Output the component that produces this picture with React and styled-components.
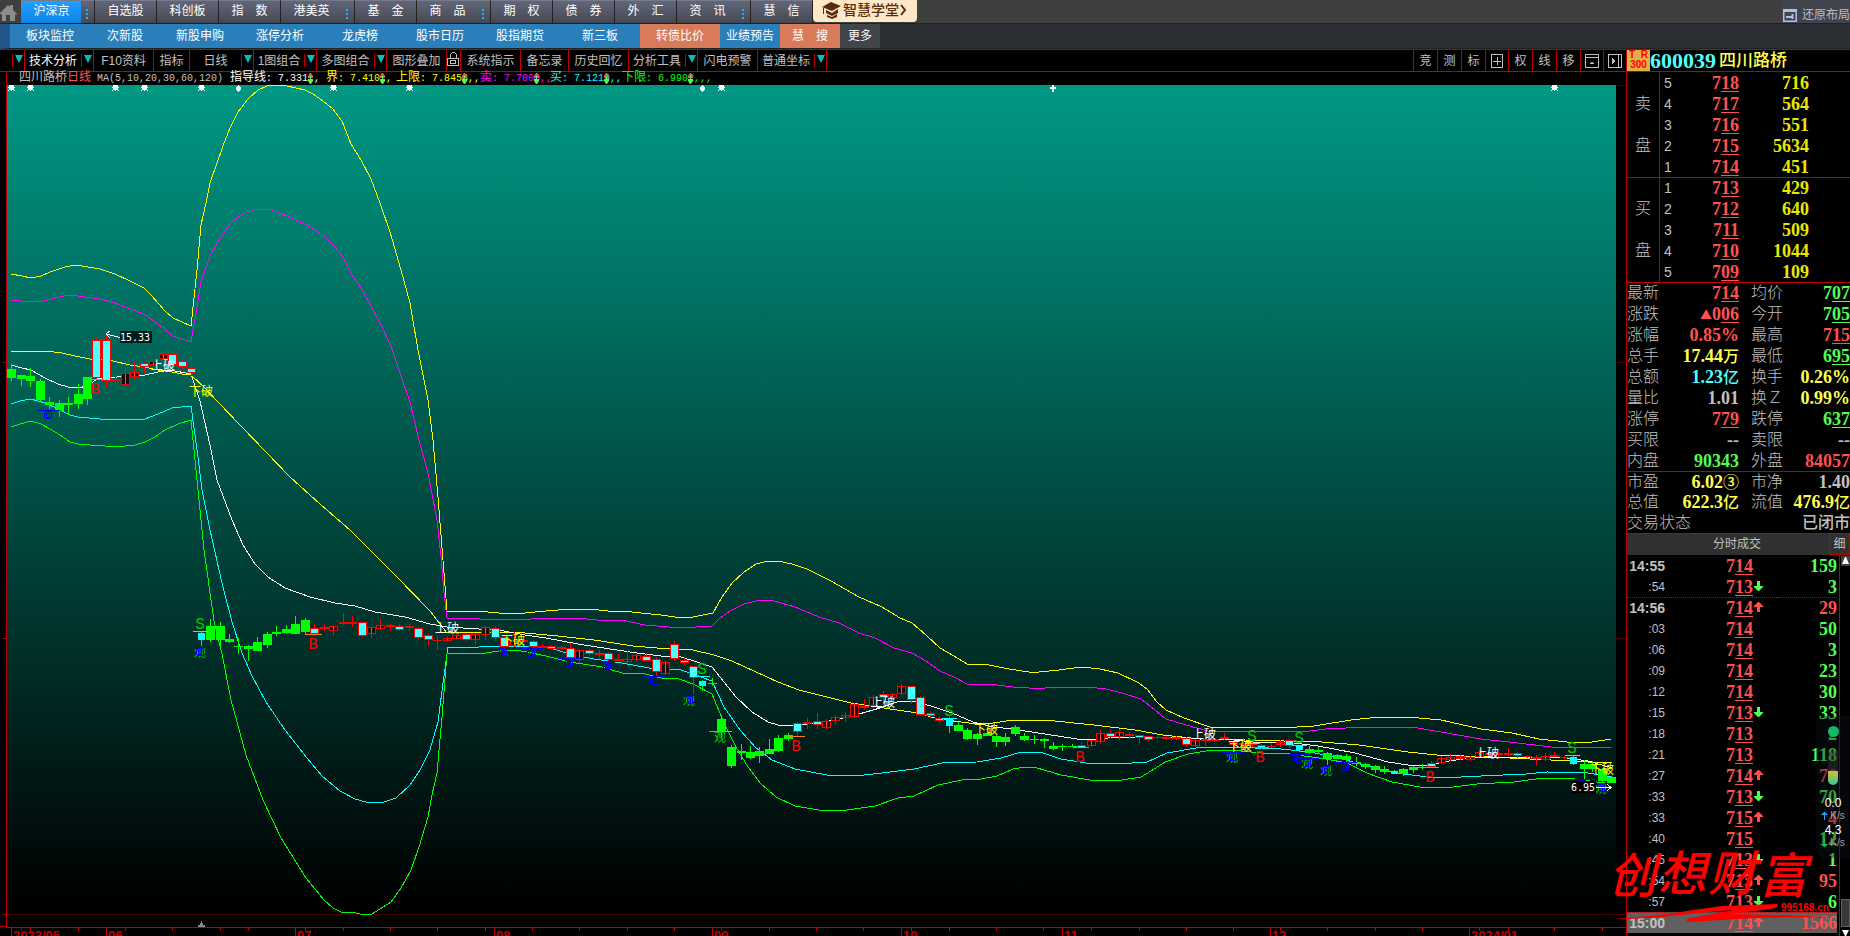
import styled, { createGlobalStyle } from "styled-components";

const RED = "#c00000";

const menu = [
    { label: "沪深京", active: true, more: true },
    { label: "自选股" },
    { label: "科创板" },
    { label: "指　数" },
    { label: "港美英", more: true },
    { label: "基　金" },
    { label: "商　品", more: true },
    { label: "期　权" },
    { label: "债　券" },
    { label: "外　汇" },
    { label: "资　讯", more: true },
    { label: "慧　信" },
];

const links = [
    { label: "板块监控", width: 80 },
    { label: "次新股", width: 70 },
    { label: "新股申购", width: 80 },
    { label: "涨停分析", width: 80 },
    { label: "龙虎榜", width: 80 },
    { label: "股市日历", width: 80 },
    { label: "股指期货", width: 80 },
    { label: "新三板", width: 80 },
    { label: "转债比价", width: 80, bg: "#d97a5b" },
    { label: "业绩预告", width: 60 },
    { label: "慧　搜", width: 60, bg: "#d97a5b" },
    { label: "更多", width: 40, bg: "#41444a" },
];

const tools = [
    { label: "", width: 25, drop: true },
    { label: "技术分析", width: 69, drop: true, active: true },
    { label: "F10资料", width: 60 },
    { label: "指标", width: 36 },
    { label: "日线", width: 64, drop: true },
    { label: "1图组合", width: 63, drop: true },
    { label: "多图组合", width: 70, drop: true },
    { label: "图形叠加", width: 60 },
    { label: "lock", width: 14 },
    { label: "系统指示", width: 60 },
    { label: "备忘录", width: 48 },
    { label: "历史回忆", width: 60 },
    { label: "分析工具", width: 69, drop: true },
    { label: "闪电预警", width: 60 },
    { label: "普通坐标", width: 69, drop: true },
];

const sideTools = ["竞", "测", "标", "plus", "权", "线", "移", "window", "next"];

const indicators = [
    { label: "指导线", value: "7.331", color: "#fff", width: 96, end: "," },
    { label: "界", value: "7.410", color: "#ff0", width: 70, end: "," },
    { label: "上限", value: "7.8458", color: "#ff0", width: 84, end: ",,", over: true },
    { label: "卖", value: "7.7000", color: "#f0f", width: 70, end: ",,", over: true },
    { label: "买", value: "7.1219", color: "#0ff", width: 72, end: ",,", over: true },
    { label: "下限", value: "6.9902", color: "#0f0", width: 100, end: ",,,", over: true },
];

const sells = [["5", "718", "716"], ["4", "717", "564"], ["3", "716", "551"], ["2", "715", "5634"], ["1", "714", "451"]];
const buys = [["1", "713", "429"], ["2", "712", "640"], ["3", "711", "509"], ["4", "710", "1044"], ["5", "709", "109"]];

const R = "#ff5050";
const G = "#50ff50";
const Y = "#ffff50";
const W = "#c0c0c0";

const stats = [
    ["最新", "714", R, "均价", "707", G],
    ["涨跌", "▲006", R, "今开", "705", G],
    ["涨幅", "0.85%", R, "最高", "715", R],
    ["总手", "17.44万", Y, "最低", "695", G],
    ["总额", "1.23亿", "#50ffff", "换手", "0.26%", Y],
    ["量比", "1.01", W, "换Ｚ", "0.99%", Y],
    ["涨停", "779", R, "跌停", "637", G],
    ["买限", "--", W, "卖限", "--", W],
    ["内盘", "90343", G, "外盘", "84057", R],
];

const values = [
    ["市盈", "6.02③", Y, "市净", "1.40", W],
    ["总值", "622.3亿", Y, "流值", "476.9亿", Y],
];

const ticks = [
    ["14:55", "714", "", "159", G],
    [":54", "713", "down", "3", G],
    ["14:56", "714", "up", "29", R],
    [":03", "714", "", "50", G],
    [":06", "714", "", "3", G],
    [":09", "714", "", "23", G],
    [":12", "714", "", "30", G],
    [":15", "713", "down", "33", G],
    [":18", "713", "", "2", G],
    [":21", "713", "", "118", G],
    [":27", "714", "up", "70", R],
    [":33", "713", "down", "70", G],
    [":33", "715", "up", "4", R],
    [":40", "715", "", "12", G],
    [":45", "713", "down", "1", G],
    [":54", "715", "up", "95", R],
    [":57", "713", "down", "6", G],
    ["15:00", "714", "up", "1566", R],
];

const curves = [
    { color: "#ff0", points: "11,274 22,276 31,278 41,276 50,272 65,267 76,265 88,267 100,269 115,274 130,281 144,288 152,296 165,311 173,318 182,322 191,326 197,270 201,225 206,203 210,183 217,163 223,146 230,128 238,112 248,99 258,90 267,86 277,85 287,86 305,90 313,94 323,101 333,109 342,121 351,144 361,160 371,179 380,203 390,232 401,270 410,303 418,350 428,400 433,440 438,497 444,573 447,611 477,611 499,613 525,613 546,611 570,609 590,609 608,611 622,611 641,613 661,615 675,617 693,617 713,613 722,597 732,583 744,572 756,564 768,561 778,561 792,564 807,569 831,581 859,597 882,607 900,618 912,623 926,635 940,648 954,656 967,664 989,665 1009,669 1029,672 1039,672 1059,670 1081,667 1100,669 1118,673 1139,683 1148,690 1157,702 1166,710 1184,718 1210,727 1261,727 1281,728 1314,726 1351,720 1379,717 1408,717 1441,720 1481,729 1512,733 1539,739 1567,742 1592,742 1611,739" },
    { color: "#f0f", points: "11,300 31,302 43,301 55,298 68,295 78,296 100,299 115,303 130,309 144,314 158,324 173,336 182,339 191,342 197,307 201,282 210,256 217,243 230,224 238,217 247,212 258,209 268,209 277,212 287,216 305,224 317,231 325,237 333,245 343,257 352,275 363,291 380,323 391,346 400,373 410,402 419,440 428,473 437,520 441,557 444,593 447,618 480,619 531,619 543,618 558,619 578,618 606,621 622,620 645,625 681,628 712,626 720,618 730,611 744,604 760,600 774,601 795,607 819,617 839,623 859,633 875,638 894,648 912,653 926,661 940,671 954,677 967,684 989,684 1013,687 1029,688 1045,688 1065,687 1088,687 1106,689 1122,693 1141,699 1155,710 1166,719 1186,725 1208,731 1245,731 1302,732 1326,729 1367,727 1412,727 1441,732 1481,739 1518,743 1551,747 1596,748 1611,747" },
    { color: "#ff0", points: "11,352 22,351 45,351 62,353 75,356 90,359 113,361 130,365 144,367 158,370 172,372 182,374 191,375 205,388 217,401 290,477 320,504 350,530 395,575 430,611 447,633 499,632 525,633 558,636 594,640 633,646 657,648 693,650 714,655 732,661 756,672 778,682 799,690 827,697 851,703 871,706 890,709 918,713 938,719 969,723 993,723 1013,720 1045,720 1094,725 1135,730 1163,735 1200,739 1228,739 1245,740 1322,742 1359,745 1408,752 1437,755 1490,757 1530,759 1571,761 1588,762 1612,763" },
    { color: "#fff", points: "11,365 22,368 31,370 45,378 58,384 68,387 80,388 90,384 97,379 105,378 130,376 145,375 158,372 170,370 191,374 200,401 210,445 217,480 232,520 243,545 255,564 268,577 285,588 310,597 335,603 355,606 375,612 405,617 430,624 447,627 479,629 499,630 525,635 546,638 578,644 610,649 637,653 661,656 681,657 697,662 712,667 724,682 736,697 752,712 768,722 778,725 795,725 819,723 839,719 859,714 880,708 900,701 914,701 934,707 952,713 973,722 993,727 1012,729 1045,734 1077,739 1098,739 1118,737 1175,737 1200,739 1224,739 1253,742 1286,742 1318,746 1355,753 1388,762 1408,765 1428,765 1449,761 1477,757 1530,757 1567,758 1588,761 1612,768" },
    { color: "#0ff", points: "11,404 20,401 31,399 45,403 58,409 70,415 78,417 100,419 125,420 145,419 158,414 172,408 191,406 198,457 202,490 210,530 222,583 232,622 242,653 252,676 266,702 285,730 307,758 322,776 340,791 355,799 366,802 384,802 396,798 410,785 420,770 430,750 438,722 443,683 448,647 479,647 491,646 525,646 550,648 570,654 594,659 622,663 649,668 681,670 693,674 712,681 724,707 740,730 756,748 772,760 795,769 827,775 855,776 882,773 914,769 942,763 977,762 1001,758 1021,752 1043,753 1061,759 1086,763 1118,764 1147,762 1167,753 1196,748 1228,747 1281,749 1310,752 1339,758 1367,766 1396,773 1428,777 1461,777 1481,776 1526,774 1547,772 1588,773 1612,777" },
    { color: "#0f0", points: "11,427 20,424 31,421 41,424 50,429 60,435 70,442 78,444 90,445 105,446 115,447 135,445 145,442 155,437 165,430 178,424 191,420 197,480 204,550 214,621 222,654 231,700 246,755 263,800 281,838 306,878 324,900 333,908 343,913 352,912 360,914 372,914 391,902 401,888 411,870 419,847 428,817 432,795 437,773 442,717 447,654 467,653 479,654 499,651 515,650 527,652 546,656 570,662 602,667 622,673 641,673 661,678 679,679 693,684 712,694 724,723 736,747 748,767 760,783 776,797 795,806 819,810 847,810 875,806 898,798 914,796 938,785 962,780 981,779 997,776 1013,769 1025,767 1037,768 1061,775 1090,780 1122,780 1141,777 1151,771 1165,762 1188,754 1212,750 1241,751 1261,753 1290,754 1326,759 1347,763 1367,773 1392,782 1420,787 1453,787 1477,784 1514,782 1543,778 1575,779 1612,784" },
];

// x, body top, body bottom, high, low, kind
// g = falling, c = signal bar, f = red with cyan fill, h = hollow red, r = thin red
const candles = [
    [11, 369, 378, 364, 381, "g"], [21, 375, 379, 375, 386, "g"], [30, 376, 381, 368, 387, "g"], [40, 381, 400, 379, 401, "g"],
    [49, 402, 405, 397, 409, "g"], [59, 403, 411, 400, 417, "g"], [68, 403, 405, 397, 415, "g"], [78, 394, 404, 384, 409, "g"],
    [87, 377, 399, 377, 405, "g"], [96, 340, 378, 337, 379, "f"], [106, 340, 381, 335, 387, "f"], [115, 379, 381, 374, 390, "r"],
    [125, 373, 385, 365, 390, "h"], [134, 372, 377, 362, 380, "h"], [144, 363, 367, 361, 374, "f"], [153, 361, 365, 359, 366, "h"],
    [163, 354, 359, 352, 362, "h"], [172, 354, 365, 353, 366, "f"], [182, 361, 367, 359, 370, "f"], [191, 368, 373, 358, 376, "f"],
    [201, 633, 640, 631, 646, "c"], [210, 626, 640, 619, 642, "g"], [220, 626, 640, 622, 647, "g"], [229, 639, 642, 634, 643, "g"],
    [238, 646, 647, 638, 654, "g"], [248, 646, 649, 645, 661, "g"], [257, 642, 651, 637, 651, "g"], [267, 634, 645, 632, 648, "g"],
    [276, 632, 634, 626, 636, "g"], [286, 629, 633, 625, 634, "g"], [295, 624, 634, 616, 634, "g"], [305, 620, 632, 618, 635, "g"],
    [314, 628, 634, 624, 636, "f"], [324, 627, 629, 624, 631, "r"], [333, 626, 631, 625, 636, "h"], [343, 622, 624, 613, 625, "r"],
    [352, 622, 624, 616, 627, "r"], [362, 622, 636, 622, 637, "f"], [371, 627, 634, 627, 638, "h"], [380, 625, 629, 619, 630, "h"],
    [390, 625, 627, 624, 631, "r"], [399, 626, 630, 624, 631, "f"], [409, 626, 628, 624, 631, "r"], [418, 628, 638, 627, 639, "f"],
    [428, 635, 640, 634, 646, "f"], [437, 640, 641, 636, 650, "r"], [447, 638, 641, 636, 642, "h"], [456, 635, 639, 634, 640, "h"],
    [466, 634, 640, 633, 641, "f"], [475, 634, 640, 633, 645, "h"], [485, 627, 635, 626, 640, "h"], [495, 628, 638, 626, 641, "f"],
    [504, 637, 647, 636, 648, "f"], [514, 641, 646, 632, 647, "h"], [523, 640, 642, 638, 645, "r"], [533, 641, 647, 640, 648, "f"],
    [542, 646, 648, 644, 649, "r"], [551, 646, 649, 645, 650, "f"], [561, 647, 649, 646, 650, "r"], [570, 648, 658, 643, 659, "f"],
    [579, 650, 660, 649, 663, "h"], [589, 650, 654, 649, 656, "f"], [599, 653, 655, 650, 658, "r"], [608, 653, 660, 652, 661, "f"],
    [618, 659, 661, 654, 662, "r"], [627, 659, 662, 651, 664, "h"], [636, 655, 660, 654, 662, "h"], [646, 656, 661, 653, 662, "f"],
    [656, 659, 672, 657, 676, "f"], [665, 662, 674, 661, 675, "h"], [674, 644, 659, 641, 661, "f"], [684, 660, 663, 657, 665, "f"],
    [693, 666, 678, 666, 694, "f"], [702, 681, 686, 680, 691, "c"], [712, 683, 684, 678, 686, "g"], [721, 719, 732, 715, 738, "g"],
    [731, 747, 766, 745, 768, "g"], [741, 751, 753, 744, 760, "g"], [750, 752, 758, 746, 759, "g"], [759, 751, 756, 747, 763, "g"],
    [769, 749, 754, 739, 754, "g"], [778, 738, 751, 735, 752, "g"], [788, 735, 739, 733, 741, "g"], [797, 723, 732, 722, 736, "f"],
    [807, 722, 724, 718, 729, "r"], [817, 721, 725, 713, 729, "f"], [826, 721, 728, 719, 729, "h"], [835, 717, 721, 715, 724, "h"],
    [845, 715, 718, 712, 722, "h"], [854, 704, 717, 703, 718, "h"], [864, 706, 708, 699, 709, "r"], [873, 697, 706, 695, 708, "h"],
    [883, 694, 698, 691, 706, "f"], [892, 694, 698, 693, 700, "h"], [901, 686, 694, 684, 695, "h"], [911, 686, 700, 686, 704, "f"],
    [920, 697, 715, 696, 716, "f"], [930, 713, 716, 711, 718, "f"], [939, 718, 721, 717, 723, "f"], [949, 718, 726, 717, 733, "c"],
    [958, 725, 731, 722, 731, "g"], [967, 730, 739, 728, 740, "g"], [977, 734, 739, 733, 745, "g"], [987, 733, 736, 731, 736, "g"],
    [996, 736, 742, 735, 747, "g"], [1005, 737, 742, 733, 746, "g"], [1015, 727, 734, 725, 736, "g"], [1024, 736, 740, 733, 741, "g"],
    [1034, 739, 740, 735, 744, "g"], [1044, 739, 741, 738, 748, "g"], [1053, 746, 749, 742, 750, "g"], [1062, 746, 747, 744, 751, "g"],
    [1072, 746, 747, 744, 747, "g"], [1081, 745, 747, 742, 748, "f"], [1091, 740, 746, 740, 747, "h"], [1100, 733, 742, 730, 744, "h"],
    [1110, 733, 737, 730, 738, "f"], [1119, 732, 737, 729, 740, "h"], [1129, 734, 736, 732, 739, "r"], [1139, 735, 738, 735, 743, "f"],
    [1148, 736, 740, 736, 742, "f"], [1157, 737, 738, 736, 739, "r"], [1166, 737, 739, 736, 740, "r"], [1176, 737, 739, 736, 740, "r"],
    [1186, 738, 745, 737, 747, "f"], [1195, 740, 746, 739, 747, "h"], [1205, 739, 741, 738, 746, "r"], [1214, 739, 741, 738, 742, "r"],
    [1224, 737, 739, 733, 740, "r"], [1233, 742, 745, 741, 751, "f"], [1243, 743, 745, 738, 746, "r"], [1252, 743, 745, 742, 747, "r"],
    [1261, 745, 748, 744, 749, "f"], [1271, 746, 747, 743, 748, "r"], [1280, 742, 745, 740, 747, "h"], [1289, 740, 746, 739, 748, "f"],
    [1299, 746, 750, 745, 752, "c"], [1309, 749, 753, 746, 755, "g"], [1318, 750, 752, 747, 754, "g"], [1327, 753, 759, 752, 765, "g"],
    [1337, 755, 759, 754, 759, "g"], [1346, 756, 760, 754, 762, "g"], [1356, 762, 764, 757, 766, "g"], [1365, 764, 767, 763, 769, "g"],
    [1375, 766, 770, 765, 773, "g"], [1384, 769, 772, 766, 774, "g"], [1394, 771, 774, 770, 774, "c"], [1403, 769, 774, 768, 776, "g"],
    [1413, 767, 770, 766, 773, "g"], [1422, 767, 768, 764, 769, "g"], [1431, 763, 767, 761, 768, "f"], [1441, 758, 763, 756, 764, "h"],
    [1450, 757, 760, 754, 761, "h"], [1460, 756, 759, 755, 760, "h"], [1470, 757, 760, 756, 761, "h"], [1479, 752, 757, 750, 758, "h"],
    [1489, 753, 755, 751, 757, "r"], [1498, 753, 755, 751, 757, "r"], [1508, 753, 755, 748, 756, "r"], [1517, 753, 756, 752, 758, "f"],
    [1527, 756, 757, 755, 758, "r"], [1536, 757, 759, 755, 765, "r"], [1545, 756, 760, 753, 761, "h"], [1554, 755, 757, 752, 757, "r"],
    [1564, 757, 758, 756, 759, "r"], [1573, 757, 764, 755, 765, "c"], [1584, 764, 769, 760, 779, "g"], [1592, 764, 769, 761, 772, "g"],
    [1602, 769, 781, 768, 783, "g"], [1611, 777, 783, 777, 783, "g"],
];

const upBreaks = [[151, 370], [435, 633], [871, 707], [1192, 739], [1475, 758]];
const downBreaks = [[189, 396], [501, 645], [974, 734], [1228, 751], [1590, 774]];
const sellMarks = [[200, 629], [702, 674], [949, 716], [1252, 741], [1299, 743], [1572, 753]];
const buyMarks = [[95, 394], [313, 649], [796, 751], [1080, 762], [1260, 762], [1430, 782]];
const rings = [[48, 415], [503, 652], [531, 653], [569, 663], [607, 666], [654, 681], [1298, 759], [1345, 767], [1583, 784], [200, 652], [689, 700], [1232, 757], [1307, 763], [1326, 770], [1601, 788]];
const watch = [[200, 652], [689, 700], [720, 737], [1232, 757], [1307, 763], [1326, 770], [1601, 788]];
const stars = [11, 30, 115, 144, 201, 333, 409, 721, 1554];
const months = [[11, "2023/05"], [106, "06"], [295, "07"], [494, "08"], [712, "09"], [901, "10"], [1062, "11"], [1270, "12"], [1469, "2024/01"]];
const minorTicks = [21, 30, 78, 125, 172, 220, 248, 305, 343, 390, 437, 485, 532, 579, 627, 674, 721, 769, 816, 863, 911, 949, 996, 1043, 1091, 1139, 1186, 1233, 1280, 1327, 1375, 1422, 1479, 1508, 1554, 1602];

const Candle = ({ data }) => {
    const [x, top, bottom, high, low, kind] = data;
    const line = kind === "g" || kind === "c" ? "#0f0" : "#f00";
    const h = Math.max(bottom - top, 1);

    return (
        <g>
            <rect x={x} y={high} width="1" height={low - high} fill={line} />
            {kind === "g" && <rect x={x - 4} y={top} width="9" height={h} fill="#0f0" />}
            {kind === "r" && <rect x={x - 4} y={top} width="9" height={h} fill="#f00" />}
            {kind === "c" && <rect x={x - 3} y={top} width="7" height={h} fill="#0ff" />}
            {kind === "f" && (
                <>
                    <rect x={x - 4} y={top} width="9" height={h} fill="#f00" />
                    <rect x={x - 3} y={top + 1} width="7" height={Math.max(h - 2, 1)} fill="#50ffff" />
                </>
            )}
            {kind === "h" && (
                <>
                    <rect x={x - 4} y={top} width="9" height={h} fill="#f00" />
                    <rect x={x - 3} y={top + 1} width="7" height={Math.max(h - 2, 1)} fill="#200808" />
                    <rect x={x} y={top + 1} width="1" height={Math.max(h - 2, 1)} fill="#ff5050" />
                </>
            )}
        </g>
    );
};

const Chart = () => (
    <ChartSvg viewBox="0 85 1626 851" preserveAspectRatio="xMinYMin slice" shapeRendering="crispEdges">
        <defs>
            <linearGradient id="sea" x1="0" y1="0" x2="0" y2="1">
                <stop offset="0" stopColor="#009884" />
                <stop offset="1" stopColor="#000" />
            </linearGradient>
        </defs>
        <rect x="7" y="85" width="1609" height="822" fill="url(#sea)" />
        <path d="M7 914.5H1626M1616 85.5H1626M1616 362.5H1626M1616 638.5H1626" stroke="#4a0000" />
        <path d="M6.5 85V927M3 362.5H7M3 638.5H7M3 914.5H7M0 926.5H7M6 927.5H1626" stroke={RED} fill="none" />
        <path d="M0 85" />
        {curves.map((c) => (
            <polyline key={c.points} points={c.points} fill="none" stroke={c.color} />
        ))}
        {candles.map((c) => <Candle key={c[0]} data={c} />)}
        {sellMarks.map(([x, y]) => (
            <g key={x}>
                <rect x={x - 7} y={y + 2} width="15" height="1" fill="#0ff" />
                <Mark x={x} y={y} fill="#00c800">S</Mark>
            </g>
        ))}
        {buyMarks.map(([x, y]) => (
            <g key={x}>
                <rect x={x - 7} y={y - 15} width="16" height="1" fill="#ff8000" />
                <Mark x={x} y={y} fill="#f00">B</Mark>
            </g>
        ))}
        {watch.map(([x, y]) => (
            <Watch key={x} x={x} y={y + 5}>观</Watch>
        ))}
        <rect x="709" y="731" width="23" height="1" fill="#0f0" />
        {rings.map(([x, y]) => (
            <g key={x} stroke="#00f" fill="none">
                <path d={`M${x - 11} ${y - 5}.5H${x + 12}`} />
                <circle cx={x} cy={y} r="4" />
                <rect x={x - 2} y={y - 2} width="3" height="4" />
            </g>
        ))}
        {upBreaks.map(([x, y]) => <Break key={x} x={x} y={y} fill="#fff">上破</Break>)}
        {downBreaks.map(([x, y]) => <Break key={x} x={x} y={y} fill="#ff0">下破</Break>)}
        {stars.map((x) => (
            <path key={x} d={`M${x - 2} 85h5v5h-5zM${x - 3} 84h1v1h-1zM${x + 3} 84h1v1h-1zM${x - 3} 90h1v1h-1zM${x + 3} 90h1v1h-1zM${x - 3} 87h7v1h-7zM${x} 84h1v7h-1z`} fill="#fff" />
        ))}
        {[238, 702].map((x) => (
            <path key={x} d={`M${x} 85h1v1h1v1h1v3h-1v1h-1v1h-1v-1h-1v-1h-1v-3h1v-1h1z`} fill="#fff" />
        ))}
        <path d="M1052 85h2v2h2v2h-2v3h-2v-3h-2v-2h2z" fill="#fff" />
        <rect x="120" y="331" width="32" height="12" fill="#001c18" />
        <Price x="120" y="341">15.33</Price>
        <path d="M120 337.5L106 334M110 331L106 334L110 338M1595 787.5H1611M1607 784L1611 787.5L1607 791" stroke="#fff" fill="none" />
        <rect x="1571" y="781" width="25" height="12" fill="#000" />
        <Price x="1571" y="791">6.95</Price>
        <path d="M198 927h7v-2h-2v-2h-1v-2h-1v2h-1v2h-2z" fill="#888" />
        {minorTicks.map((x) => <rect key={x} x={x} y="928" width="1" height="3" fill={RED} />)}
        {months.map(([x, label]) => (
            <g key={x}>
                <rect x={x} y="928" width="1" height="8" fill={RED} />
                <Month x={x + 2} y="940">{label}</Month>
            </g>
        ))}
    </ChartSvg>
);

const ToolIcon = ({ name }) => (
    <svg width="14" height="14" viewBox="0 0 14 14" fill="none" stroke="#c0c0c0" shapeRendering="crispEdges">
        {name === "plus" && <path d="M1.5 .5H12.5V13.5H1.5ZM3 7H11M7 3V11" />}
        {name === "window" && <path d="M.5 .5H13.5V13.5H.5ZM0 3.5H14M5 9.5H9M6 8.5H8" />}
        {name === "next" && <path d="M.5 .5H13.5V13.5H.5ZM10.5 1V13M4.5 4V10M5.5 5V9M6.5 6V8" />}
        {name === "lock" && <path d="M1.5 6.5H12.5V13.5H1.5ZM4.5 6V2.5L6.5 .5H8.5L10.5 2.5V6M4.5 8.5H9.5V11.5H4.5Z" />}
    </svg>
);

const Arrow = ({ up }) => (
    <svg width="9" height="10" viewBox="0 0 9 10" aria-hidden="true">
        <path d={up ? "M4 0h1l4 4v1H6v5H3V5H0V4z" : "M3 0h3v5h3v1L5 10H4L0 6V5h3z"} fill={up ? R : G} />
    </svg>
);

const Quote = ({ value, color }) => {
    const plain = /[.%\-亿万]/.test(value) || value.length > 4;
    if (plain) {
        const digits = value.replace(/[③亿万]/, "");
        return <Num $color={color}>{digits}<Unit>{value.slice(digits.length)}</Unit></Num>;
    }
    return (
        <Num $color={color}>
            {value[0] === "▲" ? <><Unit $small>▲</Unit>{value[1]}</> : value[0]}
            <u>{value.slice(-2)}</u>
        </Num>
    );
};

const Book = ({ side, rows, height }) => (
    <Table $height={height}>
        <colgroup>
            <col width="33" /><col width="24" /><col width="55" /><col width="70" /><col />
        </colgroup>
        <tbody>
            {rows.map(([level, price, volume], i) => (
                <tr key={level}>
                    {i === 0 && <SideCell rowSpan="5"><span>{side}</span><span>盘</span></SideCell>}
                    <Level>{level}</Level>
                    <Right><Quote value={price} color={R} /></Right>
                    <Right><Num $color="#e8e800">{volume}</Num></Right>
                    <td></td>
                </tr>
            ))}
        </tbody>
    </Table>
);

const StatRows = ({ rows }) => rows.map(([a, av, ac, b, bv, bc]) => (
    <tr key={a}>
        <StatLabel>{a}</StatLabel>
        <Right><Quote value={av} color={ac} /></Right>
        <StatLabel $inset>{b}</StatLabel>
        <Right><Quote value={bv} color={bc} /></Right>
    </tr>
));

const App = () => {
    return (
        <Page>
            <GlobalStyle />
            <MenuBar>
                <HomeButton aria-label="首页">
                    <svg width="20" height="18" viewBox="0 0 20 18" fill="#8c8c8c"><path d="M0 9L8 1l2 2V1h3v5l4 4-1 1-1-1v7h-5v-6H6v6H2v-7l-1 1z" /></svg>
                </HomeButton>
                {menu.map((m) => (
                    <MenuItem key={m.label} $more={m.more}>
                        <MenuButton $active={m.active}>{m.label}</MenuButton>
                        {m.more && <Dots><i /><i /><i /></Dots>}
                    </MenuItem>
                ))}
                <School>
                    <svg width="20" height="17" viewBox="0 0 20 17" fill="#5a2c0c">
                        <path d="M0 5L9 0l10 4-9 5z" /><path d="M4 8l6 3 6-4v4l-6 3-6-3z" /><path d="M5 13l5 2 5-3v3l-5 2-5-2z" /><path d="M1 6h1v6H1z" />
                    </svg>
                    智慧学堂
                    <svg width="7" height="12" viewBox="0 0 7 12" fill="none" stroke="#5a2c0c" strokeWidth="2"><path d="M1 1l4 5-4 5" /></svg>
                </School>
                <Restore>
                    <svg width="14" height="13" viewBox="0 0 14 13" fill="none" stroke="#b0c0e0"><path d="M.5 .5H13.5V12.5H.5ZM0 2H14M3 8H9M9.5 5V10" strokeWidth="2" /></svg>
                    还原布局
                </Restore>
            </MenuBar>
            <LinkBar>
                {links.map((l) => <BarLink key={l.label} href="#" $width={l.width} $bg={l.bg}>{l.label}</BarLink>)}
            </LinkBar>
            <Main>
                <ChartPanel>
                    <ToolBar>
                        {tools.map((t) => (
                            <ToolCell key={t.label} $width={t.width}>
                                {t.label === "lock"
                                    ? <ToolButton aria-label="锁定"><ToolIcon name="lock" /></ToolButton>
                                    : t.label && <ToolButton $active={t.active}>{t.label}</ToolButton>}
                                {t.drop && <Drop aria-label="展开"><i /></Drop>}
                            </ToolCell>
                        ))}
                        <Spacer />
                        {sideTools.map((t) => (
                            <SquareButton key={t} aria-label={t} $icon={t.length > 1}>{t.length > 1 ? <ToolIcon name={t} /> : t}</SquareButton>
                        ))}
                    </ToolBar>
                    <Legend>
                        <LegendName>四川路桥<b>日线</b></LegendName>
                        <LegendMa>MA(5,10,20,30,60,120)</LegendMa>
                        {indicators.map((n) => (
                            <Indicator key={n.label} $color={n.color} $width={n.width}>
                                <b>{n.label}</b>: {n.value}
                                <Swing $over={n.over} width="6" height="11" viewBox="0 0 6 11" aria-hidden="true">
                                    <path d="M2 0h1l2 3v2H0V3z" fill={R} /><path d="M0 6h5v2l-2 3H2L0 8zM2 3h1v4H2z" fill={G} />
                                </Swing>
                                {n.end}
                            </Indicator>
                        ))}
                    </Legend>
                    <Chart />
                </ChartPanel>
                <Side>
                    <SideHead>
                        <Badge><span>T&nbsp;&nbsp;R</span><span>300</span></Badge>
                        <Code>600039</Code>
                        <Name>四川路桥</Name>
                    </SideHead>
                    <Book side="卖" rows={sells} height={106} />
                    <Book side="买" rows={buys} height={105} />
                    <Table $height={189}>
                        <colgroup><col width="40" /><col width="72" /><col width="48" /><col /></colgroup>
                        <tbody><StatRows rows={stats} /></tbody>
                    </Table>
                    <Table $height={62}>
                        <colgroup><col width="40" /><col width="72" /><col width="48" /><col /></colgroup>
                        <tbody>
                            <StatRows rows={values} />
                            <tr>
                                <StatLabel colSpan="2">交易状态</StatLabel>
                                <Status colSpan="2">已闭市</Status>
                            </tr>
                        </tbody>
                    </Table>
                    <TickHead>
                        <TickTitle>分时成交</TickTitle>
                        <Detail>细</Detail>
                    </TickHead>
                    <TickBody>
                        <TickTable>
                            <colgroup><col width="38" /><col width="61" /><col /><col width="60" /></colgroup>
                            <tbody>
                                {ticks.map(([time, price, dir, volume, color], i) => (
                                    <TickRow key={i} $dotted={i === 2 || i === 17} $last={i === 17}>
                                        <Time $bold={time.length > 3}>{time}</Time>
                                        <td></td>
                                        <TickPrice><Quote value={price} color={R} />{dir && <Arrow up={dir === "up"} />}</TickPrice>
                                        <Right><Num $color={color}>{volume}</Num></Right>
                                    </TickRow>
                                ))}
                            </tbody>
                        </TickTable>
                        <Scroll>
                            <svg width="9" height="10" viewBox="0 0 9 10"><path d="M0 0h9v10H0z" fill="#404040" /><path d="M4 1h1l3 7H1z" fill="#fff" /></svg>
                            <Thumb />
                            <svg width="9" height="6" viewBox="0 0 9 6"><path d="M1 0h7L5 6H4z" fill="#fff" /></svg>
                        </Scroll>
                    </TickBody>
                    <Monitor>
                        <Dot />
                        <Battery />
                        <Speed>0.0<small><svg width="7" height="8" viewBox="0 0 7 8"><path d="M3 0h1l3 3H4v5H3V3H0z" fill="#20a0ff" /></svg>K/s</small></Speed>
                        <Speed>4.3<small><svg width="7" height="8" viewBox="0 0 7 8"><path d="M3 8h1l3-3H4V0H3v5H0z" fill="#10c060" /></svg>K/s</small></Speed>
                    </Monitor>
                    <Stamp viewBox="0 0 228 82">
                        <BrushText x="-3" y="47">创</BrushText>
                        <BrushText x="47" y="45">想</BrushText>
                        <BrushText x="97" y="45">财</BrushText>
                        <BrushText x="148" y="47">富</BrushText>
                        <path d="M2 73C40 71 76 65 110 60L166 58C168 60 166 62 160 63L118 68C156 69 190 69 222 72C188 71 156 71 126 73L80 76C74 76 74 73 80 72L122 64C80 67 40 74 2 73Z" fill="#f00" />
                        <Site x="170" y="65">995168.cn</Site>
                    </Stamp>
                </Side>
            </Main>
        </Page>
    )
};

const GlobalStyle = createGlobalStyle`
    body {
        margin: 0;
        background: #000;
        color: #c0c0c0;
        font: 12px/16px "Liberation Sans", "Noto Sans CJK SC", sans-serif;
    }
    * {
        box-sizing: border-box;
    }
    button {
        margin: 0;
        padding: 0;
        border: none;
        background: none;
        color: inherit;
        font: inherit;
        white-space: nowrap;
        cursor: pointer;
    }
`;

const Page = styled.div`
    height: 100vh;
    display: flex;
    flex-direction: column;
    overflow: hidden;
    white-space: nowrap;
`;

const MenuBar = styled.nav`
    flex: none;
    height: 24px;
    display: flex;
    background: #3f3f3f;
    border-bottom: 1px solid #222;
`;

const HomeButton = styled.button`
    width: 21px;
    padding-top: 4px;
    text-align: left;
`;

const MenuItem = styled.div`
    display: flex;
    width: ${(p) => (p.$more ? 74 : 62)}px;
    height: 23px;
    border-right: 1px solid #222;
    border-top: 1px solid #777a88;
    background: linear-gradient(#62667a, #464850);
`;

const MenuButton = styled.button`
    width: 60px;
    padding: 0 0 2px 1px;
    color: #fff;
    background: ${(p) => (p.$active ? "linear-gradient(#20a0ff, #0c84e8)" : "none")};
`;

const Dots = styled.span`
    display: flex;
    flex-direction: column;
    gap: 2px;
    margin: 8px 0 0 5px;

    i {
        width: 2px;
        height: 2px;
        background: #10b8ff;
    }
`;

const School = styled.button`
    display: flex;
    align-items: center;
    width: 104px;
    height: 22px;
    padding: 0 0 2px 9px;
    gap: 1px;
    border-radius: 0 0 4px 4px;
    background: #ffe8c8;
    color: #5a2c0c;
    font-size: 14px;
    font-weight: 500;
`;

const Restore = styled.button`
    display: flex;
    align-items: center;
    gap: 5px;
    margin-left: auto;
    padding: 7px 0 0 1px;
    height: 23px;
    color: #b8bcc8;
    background: #41444c;
`;

const LinkBar = styled.nav`
    flex: none;
    height: 25px;
    display: flex;
    background: #2c2f33;
    border-left: 10px solid #225589;
    border-bottom: 1px solid #222;
`;

const BarLink = styled.a`
    width: ${(p) => p.$width}px;
    height: 24px;
    background: ${(p) => p.$bg || "#2a7fbb"};
    color: #fff;
    line-height: 25px;
    text-align: center;
    text-decoration: none;
`;

const Main = styled.main`
    flex: 1;
    min-height: 0;
    display: flex;
`;

const ChartPanel = styled.section`
    flex: 1;
    min-width: 0;
    display: flex;
    flex-direction: column;
`;

const ToolBar = styled.div`
    flex: none;
    height: 23px;
    display: flex;
    border-top: 1px solid ${RED};
    border-bottom: 1px solid ${RED};
`;

const ToolCell = styled.div`
    display: flex;
    justify-content: flex-end;
    width: ${(p) => p.$width}px;
    border-right: 1px solid ${RED};
`;

const ToolButton = styled.button`
    flex: 1;
    color: ${(p) => (p.$active ? "#fff" : "#c0c0c0")};
`;

const Drop = styled.button`
    flex: none;
    width: 12px;
    height: 13px;
    margin-top: 4px;
    border-left: 1px solid ${RED};

    i {
        display: block;
        margin: 0 1px 4px 2px;
        border: 4px solid transparent;
        border-top: 8px solid #00c0c0;
        border-bottom: none;
    }
`;

const Spacer = styled.div`
    flex: 1;
`;

const SquareButton = styled.button`
    flex: none;
    width: ${(p) => (p.$icon ? 23 : 24)}px;
    border-left: 1px solid ${RED};

    svg {
        display: block;
        margin: auto;
    }
`;

const Legend = styled.div`
    flex: none;
    display: flex;
    height: 13px;
    padding-left: 12px;
    margin-left: 6px;
    border-left: 1px solid ${RED};
    font: 10px/13px "Liberation Mono", "Noto Sans CJK SC", monospace;

    b {
        font-size: 12px;
        font-weight: 400;
    }
`;

const LegendName = styled.span`
    width: 78px;
    font-size: 12px;

    b {
        color: ${R};
    }
`;

const LegendMa = styled.span`
    width: 133px;
`;

const Indicator = styled.span`
    width: ${(p) => p.$width}px;
    color: ${(p) => p.$color};
`;

const Swing = styled.svg`
    vertical-align: top;
    margin: 1px 0 0 ${(p) => (p.$over ? -6 : 0)}px;
`;

const ChartSvg = styled.svg`
    flex: 1;
    min-height: 0;
    width: 100%;
    display: block;
`;

const Mark = styled.text`
    font: 16px "Liberation Mono", monospace;
    text-anchor: middle;
`;

const Watch = styled.text`
    font: 12px "Noto Sans CJK SC", sans-serif;
    text-anchor: middle;
    fill: #00c800;
`;

const Break = styled.text`
    font: 12px "Noto Sans CJK SC", sans-serif;
`;

const Price = styled.text`
    font: 10px "DejaVu Sans Mono", monospace;
    fill: #fff;
`;

const Month = styled.text`
    font: bold 13px "Liberation Sans", sans-serif;
    fill: ${RED};
`;

const Side = styled.aside`
    position: relative;
    flex: none;
    width: 224px;
    border-left: 1px solid ${RED};
`;

const SideHead = styled.header`
    display: flex;
    height: 23px;
    border-top: 1px solid ${RED};
    border-bottom: 1px solid ${RED};
    line-height: 21px;
`;

const Badge = styled.div`
    display: flex;
    flex-direction: column;
    width: 23px;
    background: #e0b048;
    color: #f00;
    font: bold 10px/10px "Liberation Sans", sans-serif;
    text-align: center;
`;

const Code = styled.strong`
    width: 69px;
    color: #50ffff;
    font: bold 22px/22px "Liberation Serif", serif;
`;

const Name = styled.strong`
    color: ${Y};
    font-size: 17px;
    font-weight: 500;
`;

const Table = styled.table`
    width: 100%;
    height: ${(p) => p.$height}px;
    table-layout: fixed;
    border-spacing: 0;
    border-bottom: 1px solid ${RED};

    td, th {
        padding: 0;
        height: 20px;
        line-height: 18px;
    }
`;

const SideCell = styled.th`
    border-right: 1px solid ${RED};
    font-size: 16px;
    font-weight: 300;

    span {
        display: block;
    }

    span + span {
        margin-top: 24px;
    }
`;

const Level = styled.td`
    && {
        padding-left: 4px;
    }
    font-size: 14px;
`;

const Right = styled.td`
    text-align: right;
`;

const Num = styled.span`
    display: inline-block;
    vertical-align: top;
    color: ${(p) => p.$color};
    font: bold 18px/18px "Liberation Serif", serif;
    text-underline-offset: 2px;

    u {
        text-decoration-thickness: 1px;
    }
`;

const Unit = styled.span`
    font: 500 ${(p) => (p.$small ? 12 : 16)}px/16px "Noto Sans CJK SC", sans-serif;
`;

const StatLabel = styled.th`
    && {
        padding-left: ${(p) => (p.$inset ? 12 : 0)}px;
    }
    text-align: left;
    font-size: 16px;
    font-weight: 300;
`;

const Status = styled.td`
    text-align: right;
    font-size: 16px;
    font-weight: 500;
`;

const TickHead = styled.div`
    display: flex;
    height: 21px;
    background: #303030;
`;

const TickTitle = styled.h2`
    flex: 1;
    margin: 0;
    padding-left: 18px;
    font-size: 12px;
    font-weight: 400;
    line-height: 20px;
    text-align: center;
`;

const Detail = styled.button`
    width: 21px;
    border: 1px solid ${RED};
    border-top: none;
`;

const TickBody = styled.div`
    display: flex;
    height: 381px;
`;

const TickTable = styled.table`
    flex: none;
    align-self: flex-start;
    table-layout: fixed;
    border-spacing: 0;
    width: 210px;

    td {
        height: 21px;
        padding: 0;
        line-height: 18px;
    }
`;

const TickRow = styled.tr`
    background: ${(p) => (p.$last ? "#606060" : "none")};

    td {
        border-top: ${(p) => (p.$dotted ? "1px dotted #a01010" : "none")};
    }
`;

const Time = styled.td`
    text-align: right;
    font-size: ${(p) => (p.$bold ? 14 : 12)}px;
    font-weight: ${(p) => (p.$bold ? 700 : 400)};
`;

const TickPrice = styled.td`
    svg {
        vertical-align: top;
        margin: 3px 0 0 1px;
    }
`;

const Scroll = styled.div`
    display: flex;
    flex-direction: column;
    align-items: flex-end;
    width: 11px;
    padding-top: 1px;
    margin-left: 2px;
    border-left: 1px solid ${RED};
`;

const Thumb = styled.div`
    width: 9px;
    height: 28px;
    margin: auto 0 3px;
    border: 1px solid #606060;
    background: #383838;
`;

const Monitor = styled.div`
    position: absolute;
    right: 0;
    top: 667px;
    width: 34px;
    height: 142px;
    padding-top: 10px;
    border-radius: 8px 0 0 8px;
    background: rgba(16, 18, 26, 0.4);
    display: flex;
    flex-direction: column;
    align-items: center;
`;

const Dot = styled.span`
    width: 11px;
    height: 11px;
    border-radius: 50%;
    background: #10b868;
`;

const Battery = styled.span`
    width: 10px;
    height: 34px;
    margin: 14px 0 12px;
    border-radius: 0 0 5px 5px;
    background: linear-gradient(rgba(60, 60, 60, 0.4) 60%, #d0c030 60%, #30c8a0);
`;

const Speed = styled.span`
    height: 27px;
    color: #fff;
    font-size: 12px;
    line-height: 13px;
    text-align: center;

    small {
        display: flex;
        align-items: center;
        gap: 2px;
        color: #a0a0a0;
        font-size: 10px;
        line-height: 12px;
    }
`;

const Stamp = styled.svg`
    position: absolute;
    left: -16px;
    top: 797px;
    width: 228px;
    height: 82px;
    overflow: visible;
    pointer-events: none;
`;

const BrushText = styled.text`
    font: italic 500 48px "Noto Sans CJK SC", sans-serif;
    fill: #f00;
`;

const Site = styled.text`
    font: bold 10px "Liberation Sans", sans-serif;
    fill: #f00;
`;

export default App;
